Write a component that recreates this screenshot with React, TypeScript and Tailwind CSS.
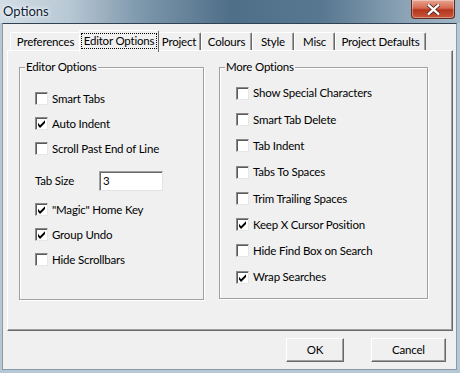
import React from "react";

const font = { fontFamily: "Lato, 'Noto Sans', Arial, sans-serif" };

function Check({ checked }: { checked?: boolean }) {
  return (
    <span className="relative inline-block w-[13px] h-[13px] shrink-0 bg-white border border-t-[#8a8a8a] border-l-[#8a8a8a] border-r-[#e6e6e6] border-b-[#e6e6e6] shadow-[inset_1px_1px_0_#5a5a5a]">
      {checked && (
        <svg viewBox="0 0 13 13" className="absolute left-[-1px] top-[-1px] w-[13px] h-[13px]">
          <path d="M3 5.8 L5 8.3 L10 3.3 L10 6 L5 11 L3 8.5 Z" fill="#000" />
        </svg>
      )}
    </span>
  );
}

function Row({ label, checked, className = "" }: { label: string; checked?: boolean; className?: string }) {
  return (
    <div className={"flex items-center gap-[4px] " + className}>
      <Check checked={checked} />
      <span className="text-[11.5px] tracking-[-0.2px] text-black leading-none">{label}</span>
    </div>
  );
}

const tabs: { t: string; w: string }[] = [
  { t: "Preferences", w: "w-[71px]" },
  { t: "Editor Options", w: "w-[80px]" },
  { t: "Project", w: "w-[44px]" },
  { t: "Colours", w: "w-[51px]" },
  { t: "Style", w: "w-[42px]" },
  { t: "Misc", w: "w-[41px]" },
  { t: "Project Defaults", w: "w-[91px]" },
];

function Button({ label, w }: { label: string; w: string }) {
  return (
    <div
      className={
        w +
        " h-[24px] flex items-center justify-center bg-[#f0f0f0] border border-t-white border-l-white border-r-[#696969] border-b-[#696969] shadow-[inset_-1px_-1px_0_#a0a0a0] text-[11.5px] tracking-[-0.2px] text-black"
      }
    >
      {label}
    </div>
  );
}

export default function App() {
  return (
    <div className="w-[460px] h-[373px] bg-[#b6c7d5] flex flex-col" style={font}>
      {/* title bar */}
      <div className="relative h-[23px] shrink-0 bg-[linear-gradient(90deg,#d2dde6_0%,#b8c8d4_15%,#7f99ad_30%,#4f6f88_50%,#587790_70%,#8ba3b5_88%,#a3b7c6_100%)] flex items-center pl-[3px]">
        <span className="text-[13px] text-[#0f1e36] [text-shadow:0_0_6px_#ffffff,0_0_3px_#ffffff]">Options</span>
        <div className="absolute left-[411px] top-0 w-[44px] h-[19px] rounded-b-[4px] border border-t-0 border-[#5e2b22] bg-[linear-gradient(180deg,#e9a593_0%,#d4694f_45%,#b3351c_55%,#c8583b_100%)] flex items-center justify-center shadow-[inset_0_0_0_1px_rgba(255,255,255,0.35)]">
          <svg viewBox="0 0 12 10" className="w-[13px] h-[11px]">
            <path d="M1.5 1 L10.5 9 M10.5 1 L1.5 9" stroke="#4a1a10" strokeWidth="3.6" strokeLinecap="round" />
            <path d="M1.5 1 L10.5 9 M10.5 1 L1.5 9" stroke="#fff" strokeWidth="2.2" strokeLinecap="round" />
          </svg>
        </div>
      </div>

      {/* client area */}
      <div className="ml-[2px] mr-[3px] h-[347px] shrink-0 bg-[#f0f0f0] border-t border-t-[#2f4254] border-l border-l-[#8b9aa8] border-r border-r-[#8b9aa8] border-b border-b-[#8b9aa8] flex flex-col">
        {/* tabs */}
        <div className="flex items-end h-[26px] pl-[7px] pt-[6px]">
          {tabs.map(({ t, w }) => {
            const sel = t === "Editor Options";
            return sel ? (
              <div
                key={t}
                className={
                  w +
                  " relative z-10 mx-[-2px] mb-[-2px] h-[22px] flex justify-center items-start pt-[2px] bg-[#f0f0f0] border-l border-t border-l-white border-t-white border-r border-r-[#696969] rounded-tl-[2px] rounded-tr-[2px]"
                }
              >
                <span className="text-[11.5px] tracking-[-0.2px] leading-[14px] px-[2px] border border-dotted border-black">{t}</span>
              </div>
            ) : (
              <div
                key={t}
                className={
                  w +
                  " h-[18px] flex justify-center items-start pt-[2px] border-l border-t border-l-white border-t-white border-r border-r-[#696969] rounded-tl-[2px] rounded-tr-[2px] shadow-[inset_-1px_0_0_#a0a0a0]"
                }
              >
                <span className="text-[11.5px] tracking-[-0.2px] leading-[14px] text-black">{t}</span>
              </div>
            );
          })}
        </div>

        {/* panel */}
        <div className="relative ml-[4px] w-[446px] h-[281px] border border-t-white border-l-white border-r-[#696969] border-b-[#696969] shadow-[inset_-1px_-1px_0_#a0a0a0]">
          <div className="flex pt-[16px] pl-[11px] gap-[15px]">
            {/* left group */}
            <div className="relative w-[185px] h-[233px] border border-[#a0a0a0] shadow-[1px_1px_0_#fff,inset_1px_1px_0_#fff]">
              <span className="absolute left-[5px] top-[-8px] px-[1px] bg-[#f0f0f0] text-[11.5px] tracking-[-0.2px] leading-[14px]">Editor Options</span>
              <div className="flex flex-col pl-[15px] pt-[18px]">
                <Row label="Smart Tabs" className="h-[25px]" />
                <Row label="Auto Indent" checked className="h-[25px]" />
                <Row label="Scroll Past End of Line" className="h-[25px]" />
                <div className="flex items-center h-[25px] mt-[7px]">
                  <span className="text-[11.5px] tracking-[-0.2px] w-[64px]">Tab Size</span>
                  <div className="w-[64px] h-[20px] bg-white border border-t-[#a0a0a0] border-l-[#a0a0a0] border-r-[#e3e3e3] border-b-[#e3e3e3] shadow-[inset_1px_1px_0_#696969] flex items-center pl-[3px] text-[11.5px]">
                    3
                  </div>
                </div>
                <Row label={'"Magic" Home Key'} checked className="h-[25px] mt-[4px]" />
                <Row label="Group Undo" checked className="h-[25px]" />
                <Row label="Hide Scrollbars" className="h-[25px]" />
              </div>
            </div>

            {/* right group */}
            <div className="relative w-[209px] h-[232px] border border-[#a0a0a0] shadow-[1px_1px_0_#fff,inset_1px_1px_0_#fff]">
              <span className="absolute left-[5px] top-[-8px] px-[1px] bg-[#f0f0f0] text-[11.5px] tracking-[-0.2px] leading-[14px]">More Options</span>
              <div className="flex flex-col pl-[16px] pt-[12px]">
                <Row label="Show Special Characters" className="h-[26.3px]" />
                <Row label="Smart Tab Delete" className="h-[26.3px]" />
                <Row label="Tab Indent" className="h-[26.3px]" />
                <Row label="Tabs To Spaces" className="h-[26.3px]" />
                <Row label="Trim Trailing Spaces" className="h-[26.3px]" />
                <Row label="Keep X Cursor Position" checked className="h-[26.3px]" />
                <Row label="Hide Find Box on Search" className="h-[26.3px]" />
                <Row label="Wrap Searches" checked className="h-[26.3px]" />
              </div>
            </div>
          </div>
        </div>

        {/* buttons */}
        <div className="flex justify-end gap-[27px] pr-[10px] mt-[7px]">
          <Button label="OK" w="w-[58px]" />
          <Button label="Cancel" w="w-[75px]" />
        </div>
      </div>
    </div>
  );
}
